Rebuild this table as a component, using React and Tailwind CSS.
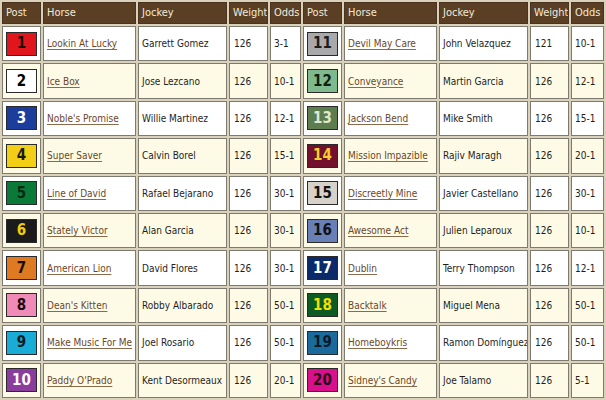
import React from "react";

const rows = [
  [
    { n: 1, bg: "bg-[#e0161c]", fg: "text-[#1a0a0a]", horse: "Lookin At Lucky", jockey: "Garrett Gomez", wt: "126", odds: "3-1" },
    { n: 11, bg: "bg-[#a9a9ab]", fg: "text-[#1c1c1c]", horse: "Devil May Care", jockey: "John Velazquez", wt: "121", odds: "10-1" },
  ],
  [
    { n: 2, bg: "bg-white", fg: "text-black", horse: "Ice Box", jockey: "Jose Lezcano", wt: "126", odds: "10-1" },
    { n: 12, bg: "bg-[#7fb98e]", fg: "text-[#10200f]", horse: "Conveyance", jockey: "Martin Garcia", wt: "126", odds: "12-1" },
  ],
  [
    { n: 3, bg: "bg-[#1d3d9c]", fg: "text-white", horse: "Noble's Promise", jockey: "Willie Martinez", wt: "126", odds: "12-1" },
    { n: 13, bg: "bg-[#5e7d4e]", fg: "text-[#dfe8d2]", horse: "Jackson Bend", jockey: "Mike Smith", wt: "126", odds: "15-1" },
  ],
  [
    { n: 4, bg: "bg-[#f2cf14]", fg: "text-[#1a1a00]", horse: "Super Saver", jockey: "Calvin Borel", wt: "126", odds: "15-1" },
    { n: 14, bg: "bg-[#72102e]", fg: "text-[#f2d22a]", horse: "Mission Impazible", jockey: "Rajiv Maragh", wt: "126", odds: "20-1" },
  ],
  [
    { n: 5, bg: "bg-[#0b7a38]", fg: "text-[#062a12]", horse: "Line of David", jockey: "Rafael Bejarano", wt: "126", odds: "30-1" },
    { n: 15, bg: "bg-[#d6d1c9]", fg: "text-[#111]", horse: "Discreetly Mine", jockey: "Javier Castellano", wt: "126", odds: "30-1" },
  ],
  [
    { n: 6, bg: "bg-[#1b1b1b]", fg: "text-[#f2d000]", horse: "Stately Victor", jockey: "Alan Garcia", wt: "126", odds: "30-1" },
    { n: 16, bg: "bg-[#6880b6]", fg: "text-[#111]", horse: "Awesome Act", jockey: "Julien Leparoux", wt: "126", odds: "10-1" },
  ],
  [
    { n: 7, bg: "bg-[#de7a22]", fg: "text-[#1a0d00]", horse: "American Lion", jockey: "David Flores", wt: "126", odds: "30-1" },
    { n: 17, bg: "bg-[#0c2a6a]", fg: "text-white", horse: "Dublin", jockey: "Terry Thompson", wt: "126", odds: "12-1" },
  ],
  [
    { n: 8, bg: "bg-[#f08bb8]", fg: "text-[#1a0a10]", horse: "Dean's Kitten", jockey: "Robby Albarado", wt: "126", odds: "50-1" },
    { n: 18, bg: "bg-[#0c5a24]", fg: "text-[#f2e000]", horse: "Backtalk", jockey: "Miguel Mena", wt: "126", odds: "50-1" },
  ],
  [
    { n: 9, bg: "bg-[#18acd6]", fg: "text-[#0a1a20]", horse: "Make Music For Me", jockey: "Joel Rosario", wt: "126", odds: "50-1" },
    { n: 19, bg: "bg-[#1b6a9c]", fg: "text-[#0a1a28]", horse: "Homeboykris", jockey: "Ramon Domínguez", wt: "126", odds: "50-1" },
  ],
  [
    { n: 10, bg: "bg-[#8b3d9e]", fg: "text-white", horse: "Paddy O'Prado", jockey: "Kent Desormeaux", wt: "126", odds: "20-1" },
    { n: 20, bg: "bg-[#d8108c]", fg: "text-[#2a0018]", horse: "Sidney's Candy", jockey: "Joe Talamo", wt: "126", odds: "5-1" },
  ],
];

const headers = [
  ["Post", "w-[39px]"],
  ["Horse", "w-[93px]"],
  ["Jockey", "w-[89px]"],
  ["Weight", "w-[39px]"],
  ["Odds", "w-[31px]"],
  ["Post", "w-[39px]"],
  ["Horse", "w-[93px]"],
  ["Jockey", "w-[89px]"],
  ["Weight", "w-[39px]"],
  ["Odds", "w-[33px]"],
];

const cell = "border border-[#7d7a72] px-[3px] align-middle h-[35.4px] whitespace-nowrap overflow-hidden";

const Half = ({ h, shade }) => (
  <>
    <td className={`${cell} ${shade} px-0`}>
      <div className={`mx-auto w-[31px] h-[24px] border border-[#2a2a2a] ${h.bg} ${h.fg} flex items-center justify-center font-bold text-[15px] leading-none`}>
        {h.n}
      </div>
    </td>
    <td className={`${cell} ${shade}`}>
      <a href="#" className="text-[#6b4628] underline underline-offset-2 decoration-[#8a6a4a]">{h.horse}</a>
    </td>
    <td className={`${cell} ${shade}`}>{h.jockey}</td>
    <td className={`${cell} ${shade} pl-[4px]`}>{h.wt}</td>
    <td className={`${cell} ${shade}`}>{h.odds}</td>
  </>
);

export default function App() {
  return (
    <div className="w-[606px] h-[400px] overflow-hidden bg-[#d9d1b9] text-[#1e1e1e] text-[10px]" style={{ fontFamily: '"DejaVu Sans Condensed", "DejaVu Sans", Verdana, sans-serif', fontStretch: "condensed" }}>
      <table className="table-fixed border-separate border-spacing-[2px] w-[606px]">
        <thead>
          <tr>
            {headers.map(([label, w], i) => (
              <th key={i} className={`${w} h-[22px] bg-[#5a3f25] border border-[#4a3320] text-[#f3ead8] font-normal text-[11px] text-left pl-[3px] pr-0 whitespace-nowrap overflow-hidden`}>
                {label}
              </th>
            ))}
          </tr>
        </thead>
        <tbody>
          {rows.map((pair, i) => {
            const shade = i % 2 === 0 ? "bg-white" : "bg-[#fdfbe6]";
            return (
              <tr key={i}>
                <Half h={pair[0]} shade={shade} />
                <Half h={pair[1]} shade={shade} />
              </tr>
            );
          })}
        </tbody>
      </table>
    </div>
  );
}
